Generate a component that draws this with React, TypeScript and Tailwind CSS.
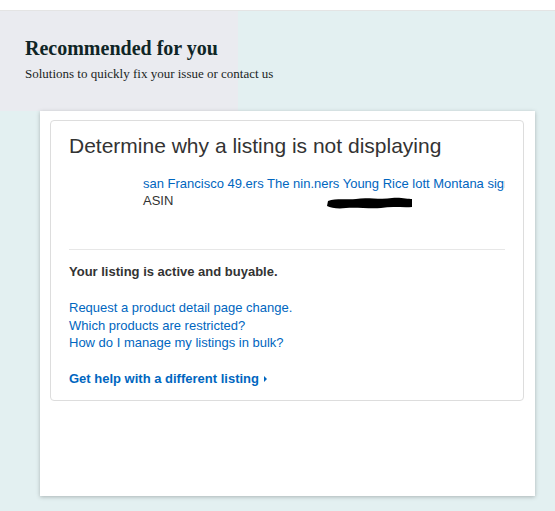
export default function App() {
  const links = [
    'Request a product detail page change.',
    'Which products are restricted?',
    'How do I manage my listings in bulk?',
  ]

  return (
    <div className="min-h-[511px] bg-[#e3f0f1] font-['Liberation_Sans',Arial,sans-serif]">
      <div className="h-[10px] border-b border-[#e4e4e4] bg-white box-content" />

      <header className="bg-[linear-gradient(to_right,#eaebf0_238px,#e3f0f1_238px)] pl-[25px] pt-[25px] pb-[29px] font-['Liberation_Serif','Times_New_Roman',serif]">
        <h1 className="text-[20px] font-bold leading-[24px] text-[#0f2526]">Recommended for you</h1>
        <p className="mt-[6px] text-[13px] leading-[16px] text-[#1a1f24]">
          Solutions to quickly fix your issue or contact us
        </p>
      </header>

      <main className="ml-[40px] h-[385px] w-[495px] bg-white pt-[9px] pl-[10px] pr-[11px] shadow-[0_1px_4px_rgba(0,0,0,0.25)]">
        <section className="rounded-[4px] border border-[#dddddd] px-[18px] pt-[12px] pb-[13px]">
          <h2 className="text-[21px] leading-[26px] text-[#333333]">
            Determine why a listing is not displaying
          </h2>

          <div className="mt-[17px] pl-[74px] text-[13px] leading-[16px]">
            <div className="overflow-hidden whitespace-nowrap text-[#0066c0]">
              san Francisco 49.ers The nin.ners Young Rice lott Montana signed football helmet
            </div>
            <div className="flex items-center text-[#333333]">
              <span>ASIN</span>
              <svg width="88" height="14" viewBox="0 0 88 14" className="ml-[153px] mt-[4px]">
                <path
                  d="M2 5 C10 2 22 4 30 3 C40 1 55 4 66 2 C74 1 82 3 86 3 L86 11 C78 12 66 10 55 12 C44 13 30 11 20 12 C12 13 5 12 1 10 Z"
                  fill="#000"
                />
              </svg>
            </div>
          </div>

          <div className="mt-[39px] border-t border-[#e7e7e7]" />

          <p className="mt-[14px] text-[13px] font-bold leading-[16px] text-[#333333]">
            Your listing is active and buyable.
          </p>

          <ul className="mt-[19px] text-[13px] leading-[17.5px] text-[#0066c0]">
            {links.map((l) => (
              <li key={l}>{l}</li>
            ))}
          </ul>

          <div className="mt-[19px] flex items-center gap-[5px] text-[13px] font-bold leading-[16px] text-[#0066c0]">
            <span>Get help with a different listing</span>
            <span className="inline-block h-0 w-0 border-y-[3px] border-l-[3px] border-y-transparent border-l-[#0066c0]" />
          </div>
        </section>
      </main>
    </div>
  )
}
